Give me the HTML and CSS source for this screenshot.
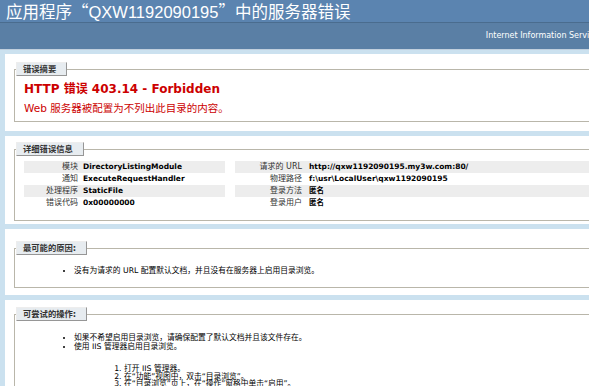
FILE: index.html
```html
<!DOCTYPE html>
<html lang="zh-CN">
<head>
<meta charset="utf-8">
<title>IIS 7.5 详细错误 - 403.14 - Forbidden</title>
<link rel="stylesheet" href="styles.css">
</head>
<body>
<div class="page">
  <div class="header">应用程序<span class="q">“</span>QXW1192090195<span class="q">”</span>中的服务器错误</div>
  <div class="server">Internet Information Services 7.5</div>
  <div class="content">
    <div class="box box-summary">
      <fieldset>
        <legend>错误摘要</legend>
        <h2>HTTP 错误 403.14 - Forbidden</h2>
        <h3>Web 服务器被配置为不列出此目录的内容。</h3>
      </fieldset>
    </div>
    <div class="box box-details">
      <fieldset>
        <legend>详细错误信息</legend>
        <div class="details">
          <table class="details-left">
            <tr class="alt"><th>模块</th><td>DirectoryListingModule</td></tr>
            <tr><th>通知</th><td>ExecuteRequestHandler</td></tr>
            <tr class="alt"><th>处理程序</th><td>StaticFile</td></tr>
            <tr><th>错误代码</th><td>0x00000000</td></tr>
          </table>
          <table class="details-right">
            <tr class="alt"><th>请求的 URL</th><td>http://qxw1192090195.my3w.com:80/</td></tr>
            <tr><th>物理路径</th><td>f:\usr\LocalUser\qxw1192090195</td></tr>
            <tr class="alt"><th>登录方法</th><td>匿名</td></tr>
            <tr><th>登录用户</th><td>匿名</td></tr>
          </table>
        </div>
      </fieldset>
    </div>
    <div class="box box-cause">
      <fieldset>
        <legend>最可能的原因:</legend>
        <ul>
          <li>没有为请求的 URL 配置默认文档，并且没有在服务器上启用目录浏览。</li>
        </ul>
      </fieldset>
    </div>
    <div class="box box-try">
      <fieldset>
        <legend>可尝试的操作:</legend>
        <ul>
          <li>如果不希望启用目录浏览，请确保配置了默认文档并且该文件存在。</li>
          <li>使用 IIS 管理器启用目录浏览。
            <ol>
              <li>打开 IIS 管理器。</li>
              <li>在“功能”视图中，双击“目录浏览”。</li>
              <li>在“目录浏览”页上，在“操作”窗格中单击“启用”。</li>
            </ol>
          </li>
        </ul>
      </fieldset>
    </div>
  </div>
</div>
</body>
</html>
```

FILE: styles.css
```css
html, body {
  margin: 0;
  padding: 0;
}

body {
  background: #CBE1EF;
  font-family: "DejaVu Sans", "Noto Sans CJK SC", sans-serif;
  font-size: 7.5px;
  line-height: 8px;
  color: #000;
  overflow: hidden;
}

.page {
  width: 640px;
}

.header {
  height: 22px;
  line-height: 22px;
  padding-left: 6px;
  background: #5B84B0;
  color: #fff;
  font-family: "Liberation Sans", "Noto Sans CJK SC", sans-serif;
  font-size: 16.5px;
  white-space: nowrap;
}

.header .q {
  font-family: "Noto Sans CJK SC", sans-serif;
}

.server {
  height: 26px;
  line-height: 26px;
  background: #5A7FA5;
  border-top: 1px solid #4A6C8E;
  border-bottom: 1px solid #C1CFDD;
  color: #fff;
  font-size: 8px;
  text-align: right;
  padding-right: 22px;
  white-space: nowrap;
}

.content {
  margin: 4px 0 0 5px;
}

.box {
  background: #fff;
  padding: 8px 0 9px 9px;
  margin-bottom: 5px;
}

fieldset {
  margin: 0;
  border: 1px solid #B9B6AA;
  padding: 0 10px 6px 9px;
  min-width: 0;
}

legend {
  margin-left: -8px;
  padding: 2px 10px 2px 6px;
  background: #E7ECF0;
  border-top: 1px solid #EDEDED;
  border-left: 1px solid #EDEDED;
  border-right: 1px solid #969696;
  border-bottom: 1px solid #969696;
  font-weight: bold;
  font-size: 8.3px;
  color: #333;
  line-height: 8px;
}

h2 {
  margin: 6px 0 0;
  font-size: 12px;
  line-height: 14px;
  color: #CC0000;
  font-weight: bold;
}

h3 {
  margin: 5px 0 0;
  font-size: 10.5px;
  line-height: 14px;
  color: #CC0000;
  font-weight: normal;
}

/* details */
.box-details {
  padding: 6px 0 3px 9px;
}

.box-details fieldset {
  padding-bottom: 11px;
}

.details {
  display: flex;
  gap: 10px;
  margin-top: 5px;
}

table {
  border-collapse: collapse;
  border: none;
}

.details-left {
  width: 201px;
  flex: none;
}

.details-right {
  flex: 1;
}

tr {
  height: 12px;
}

th, td {
  padding: 0;
  vertical-align: middle;
  text-align: left;
  white-space: nowrap;
}

th {
  font-weight: normal;
  font-size: 8px;
  text-align: right;
  color: #333;
}

td {
  font-weight: bold;
}

.details-left th {
  width: 54px;
  padding-right: 5px;
}

.details-right th {
  width: 67px;
  padding-right: 7px;
}

tr.alt th, tr.alt td {
  background: #EDEDED;
}

/* lists */
ul {
  margin: 0;
  padding-left: 50px;
  list-style: disc;
}

li {
  font-size: 7.75px;
}

ol {
  margin: 14px 0 0;
  padding-left: 50px;
  list-style: decimal;
}

.box-cause {
  padding: 12px 0 7px 9px;
}

.box-cause fieldset {
  padding-bottom: 12px;
}

.box-cause ul {
  margin-top: 12px;
}

.box-try {
  padding: 7px 0 20px 9px;
}

.box-try ul {
  margin-top: 12px;
}

.box-try ul > li {
  line-height: 9px;
}

.box-try ol > li {
  line-height: 7.5px;
}
```
